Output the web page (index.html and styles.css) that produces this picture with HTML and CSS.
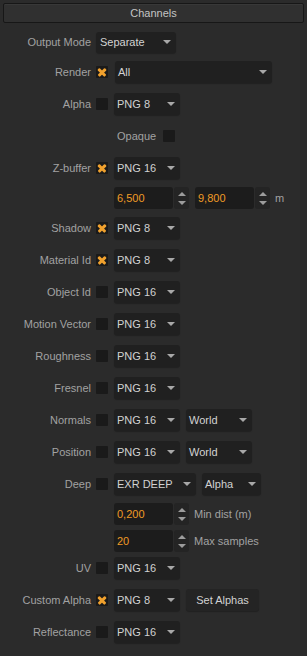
FILE: index.html
```html
<!DOCTYPE html>
<html lang="en">
<head>
    <meta charset="UTF-8">
    <meta name="viewport" content="width=device-width, initial-scale=1.0">
    <title>Channels</title>
    <link rel="stylesheet" href="styles.css">
</head>
<body>
    <div class="panel">
        <div class="panel-header">Channels</div>

        <div class="rows">
            <div class="row first">
                <span class="label">Output Mode</span>
                <div class="select w-mode">Separate <span class="caret"></span></div>
            </div>

            <div class="row m8">
                <span class="label">Render</span>
                <span class="check on"></span>
                <div class="select w-all">All <span class="caret"></span></div>
            </div>

            <div class="row">
                <span class="label">Alpha</span>
                <span class="check"></span>
                <div class="select">PNG 8 <span class="caret"></span></div>
            </div>

            <div class="row indent-opaque">
                <span class="plain">Opaque</span>
                <span class="check after"></span>
            </div>

            <div class="row">
                <span class="label">Z-buffer</span>
                <span class="check on"></span>
                <div class="select">PNG 16 <span class="caret"></span></div>
            </div>

            <div class="row m8 indent">
                <div class="spin">
                    <div class="spin-field">6,500</div>
                    <div class="spin-arrows"><span class="up"></span><span class="down"></span></div>
                </div>
                <div class="spin second">
                    <div class="spin-field">9,800</div>
                    <div class="spin-arrows"><span class="up"></span><span class="down"></span></div>
                </div>
                <span class="unit">m</span>
            </div>

            <div class="row m8">
                <span class="label">Shadow</span>
                <span class="check on"></span>
                <div class="select">PNG 8 <span class="caret"></span></div>
            </div>

            <div class="row">
                <span class="label">Material Id</span>
                <span class="check on"></span>
                <div class="select">PNG 8 <span class="caret"></span></div>
            </div>

            <div class="row">
                <span class="label">Object Id</span>
                <span class="check"></span>
                <div class="select">PNG 16 <span class="caret"></span></div>
            </div>

            <div class="row">
                <span class="label">Motion Vector</span>
                <span class="check"></span>
                <div class="select">PNG 16 <span class="caret"></span></div>
            </div>

            <div class="row">
                <span class="label">Roughness</span>
                <span class="check"></span>
                <div class="select">PNG 16 <span class="caret"></span></div>
            </div>

            <div class="row">
                <span class="label">Fresnel</span>
                <span class="check"></span>
                <div class="select">PNG 16 <span class="caret"></span></div>
            </div>

            <div class="row">
                <span class="label">Normals</span>
                <span class="check"></span>
                <div class="select">PNG 16 <span class="caret"></span></div>
                <div class="select next">World <span class="caret"></span></div>
            </div>

            <div class="row">
                <span class="label">Position</span>
                <span class="check"></span>
                <div class="select">PNG 16 <span class="caret"></span></div>
                <div class="select next">World <span class="caret"></span></div>
            </div>

            <div class="row">
                <span class="label">Deep</span>
                <span class="check"></span>
                <div class="select w-deep">EXR DEEP <span class="caret"></span></div>
                <div class="select next w-alpha">Alpha <span class="caret"></span></div>
            </div>

            <div class="row m8 indent">
                <div class="spin">
                    <div class="spin-field">0,200</div>
                    <div class="spin-arrows"><span class="up"></span><span class="down"></span></div>
                </div>
                <span class="plain side">Min dist (m)</span>
            </div>

            <div class="row m5 indent">
                <div class="spin">
                    <div class="spin-field">20</div>
                    <div class="spin-arrows"><span class="up"></span><span class="down"></span></div>
                </div>
                <span class="plain side">Max samples</span>
            </div>

            <div class="row m5">
                <span class="label">UV</span>
                <span class="check"></span>
                <div class="select">PNG 16 <span class="caret"></span></div>
            </div>

            <div class="row">
                <span class="label">Custom Alpha</span>
                <span class="check on"></span>
                <div class="select">PNG 8 <span class="caret"></span></div>
                <div class="button">Set Alphas</div>
            </div>

            <div class="row">
                <span class="label">Reflectance</span>
                <span class="check"></span>
                <div class="select">PNG 16 <span class="caret"></span></div>
            </div>
        </div>
    </div>
</body>
</html>
```

FILE: styles.css
```css
body {
    margin: 0;
    background: #2b2b2b;
    font-family: 'Liberation Sans', Arial, sans-serif;
    font-size: 11px;
    color: #a2a2a2;
}
.panel {
    width: 307px;
    height: 656px;
    padding-top: 3px;
    box-sizing: border-box;
    background: #2b2b2b;
}
.panel-header {
    margin: 0 3px;
    height: 18px;
    line-height: 18px;
    border: 1px solid #171717;
    border-radius: 2px;
    background: #303030;
    color: #c4c4c4;
    text-align: center;
    box-shadow: inset 0 1px 0 #383838;
}
.rows {
    display: flex;
    flex-direction: column;
}
.row {
    display: flex;
    align-items: center;
    height: 22px;
    margin-top: 10px;
}
.row.first { margin-top: 8px; }
.row.m8 { margin-top: 8px; }
.row.m5 { margin-top: 5px; }
.row.indent { padding-left: 114px; }
.row.indent-opaque { padding-left: 117px; }

.label {
    width: 91px;
    flex-shrink: 0;
    text-align: right;
    margin-right: 5px;
    white-space: nowrap;
}
.plain { white-space: nowrap; }
.plain.side { margin-left: 5px; }

.check {
    width: 12px;
    height: 12px;
    flex-shrink: 0;
    margin-right: 6px;
    background: #1a1a1a;
    border-radius: 1px;
    position: relative;
}
.check.after { margin-left: 7px; }
.check.on::before,
.check.on::after {
    content: '';
    position: absolute;
    left: 1px;
    top: 5px;
    width: 10px;
    height: 2.6px;
    background: #f0a12e;
    border-radius: 1px;
}
.check.on::before { transform: rotate(45deg); }
.check.on::after { transform: rotate(-45deg); }

.select {
    width: 66px;
    height: 22px;
    box-sizing: border-box;
    padding: 0 5px 0 3px;
    display: flex;
    align-items: center;
    justify-content: space-between;
    background: #202020;
    border-radius: 3px;
    color: #d2d2d2;
    white-space: nowrap;
    box-shadow: 0 1px 1px rgba(0,0,0,0.25);
}
.select.w-mode { width: 80px; padding-left: 4px; height: 21px; }
.select.w-all { width: 157px; margin-left: 1px; padding-left: 3px; }
.select.w-deep { width: 82px; }
.select.w-alpha { width: 59px; }
.select.next { margin-left: 6px; }
.caret {
    width: 0;
    height: 0;
    border-left: 4px solid transparent;
    border-right: 4px solid transparent;
    border-top: 4px solid #a8a8a8;
}

.spin {
    display: flex;
    height: 22px;
}
.spin.second { margin-left: 6px; }
.spin-field {
    width: 59px;
    box-sizing: border-box;
    padding-left: 3px;
    line-height: 22px;
    background: #1c1c1c;
    border-radius: 3px;
    color: #ef9b26;
}
.spin-arrows {
    width: 15px;
    margin-left: 1px;
    background: #242424;
    border-radius: 3px;
    display: flex;
    flex-direction: column;
    align-items: center;
    justify-content: center;
    gap: 5px;
}
.spin-arrows .up {
    width: 0;
    height: 0;
    border-left: 4px solid transparent;
    border-right: 4px solid transparent;
    border-bottom: 4px solid #9c9c9c;
}
.spin-arrows .down {
    width: 0;
    height: 0;
    border-left: 4px solid transparent;
    border-right: 4px solid transparent;
    border-top: 4px solid #9c9c9c;
}
.unit { margin-left: 5px; }

.button {
    margin-left: 6px;
    width: 73px;
    height: 22px;
    line-height: 22px;
    text-align: center;
    background: #242424;
    border-radius: 3px;
    color: #d2d2d2;
    box-shadow: 0 1px 1px rgba(0,0,0,0.25);
}
```
